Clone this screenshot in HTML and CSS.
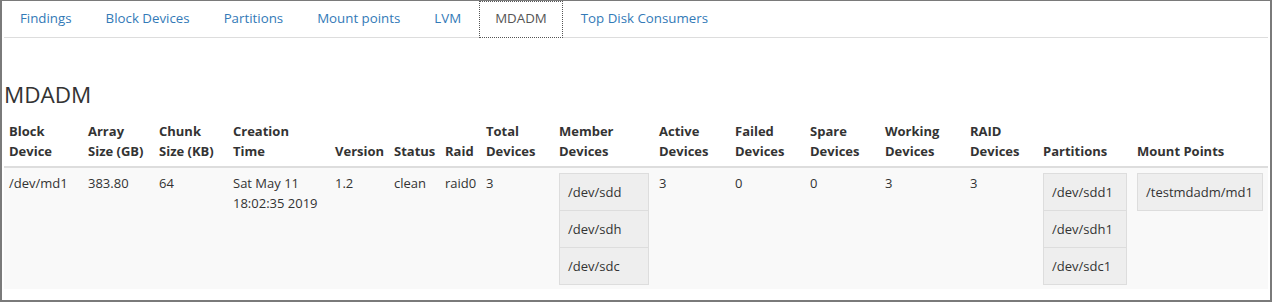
FILE: index.html
```html
<!DOCTYPE html>
<html lang="en">
<head>
  <meta charset="UTF-8" />
  <title>MDADM</title>
  <link rel="stylesheet" href="styles.css">
</head>
<body>
  <div class="window">
    <ul class="tabs">
      <li><a href="#">Findings</a></li>
      <li><a href="#">Block Devices</a></li>
      <li><a href="#">Partitions</a></li>
      <li><a href="#">Mount points</a></li>
      <li><a href="#">LVM</a></li>
      <li class="active"><a href="#">MDADM</a></li>
      <li><a href="#">Top Disk Consumers</a></li>
    </ul>

    <div class="pane">
      <h3 class="title">MDADM</h3>
      <table class="grid">
        <colgroup>
          <col class="c-block">
          <col class="c-size">
          <col class="c-chunk">
          <col class="c-time">
          <col class="c-version">
          <col class="c-status">
          <col class="c-raid">
          <col class="c-total">
          <col class="c-member">
          <col class="c-active">
          <col class="c-failed">
          <col class="c-spare">
          <col class="c-working">
          <col class="c-raiddev">
          <col class="c-parts">
          <col>
        </colgroup>
        <thead>
          <tr>
            <th>Block<br>Device</th>
            <th>Array<br>Size (GB)</th>
            <th>Chunk<br>Size (KB)</th>
            <th>Creation<br>Time</th>
            <th>Version</th>
            <th>Status</th>
            <th>Raid</th>
            <th>Total<br>Devices</th>
            <th>Member<br>Devices</th>
            <th>Active<br>Devices</th>
            <th>Failed<br>Devices</th>
            <th>Spare<br>Devices</th>
            <th>Working<br>Devices</th>
            <th>RAID<br>Devices</th>
            <th>Partitions</th>
            <th>Mount Points</th>
          </tr>
        </thead>
        <tbody>
          <tr>
            <td>/dev/md1</td>
            <td>383.80</td>
            <td>64</td>
            <td>Sat May 11<br>18:02:35 2019</td>
            <td>1.2</td>
            <td>clean</td>
            <td>raid0</td>
            <td>3</td>
            <td>
              <ul class="stack">
                <li>/dev/sdd</li>
                <li>/dev/sdh</li>
                <li>/dev/sdc</li>
              </ul>
            </td>
            <td>3</td>
            <td>0</td>
            <td>0</td>
            <td>3</td>
            <td>3</td>
            <td>
              <ul class="stack">
                <li>/dev/sdd1</li>
                <li>/dev/sdh1</li>
                <li>/dev/sdc1</li>
              </ul>
            </td>
            <td>
              <ul class="stack">
                <li>/testmdadm/md1</li>
              </ul>
            </td>
          </tr>
        </tbody>
      </table>
    </div>
  </div>
</body>
</html>
```

FILE: styles.css
```css
body {
  margin: 0;
  padding: 0;
  background-color: #fff;
  font-family: "Open Sans", "Noto Sans", sans-serif;
  font-size: 13px;
  line-height: 20px;
  color: #333;
}

.window {
  box-sizing: border-box;
  width: 1272px;
  height: 302px;
  border: 2px solid #7a7a7a;
  border-top-width: 1px;
  padding: 0 2px;
  overflow: hidden;
  background-color: #fff;
}

.tabs {
  display: flex;
  list-style: none;
  margin: 0;
  padding: 0;
  border-bottom: 1px solid #ddd;
  font-size: 13.3px;
}

.tabs li {
  margin-bottom: -1px;
}

.tabs a {
  display: block;
  margin-right: 2px;
  padding: 6px 15px 9px;
  border: 1px solid transparent;
  color: #337ab7;
  text-decoration: none;
}

.tabs .active a {
  color: #555;
  background-color: #fff;
  outline: 1px dotted #555;
  outline-offset: -1px;
}

.title {
  margin: 44px 0 8px;
  font-size: 22.5px;
  font-weight: normal;
  line-height: 26px;
}

.grid {
  width: 100%;
  border-collapse: separate;
  border-spacing: 0;
  table-layout: fixed;
}

.grid th,
.grid td {
  padding: 5px;
  text-align: left;
  vertical-align: top;
}

.grid th {
  vertical-align: bottom;
  border-bottom: 2px solid #ddd;
  font-weight: bold;
}

.grid tbody tr {
  background-color: #f9f9f9;
}

.c-block { width: 79px; }
.c-size { width: 71px; }
.c-chunk { width: 74px; }
.c-time { width: 102px; }
.c-version { width: 59px; }
.c-status { width: 51px; }
.c-raid { width: 41px; }
.c-total { width: 73px; }
.c-member { width: 100px; }
.c-active { width: 76px; }
.c-failed { width: 75px; }
.c-spare { width: 75px; }
.c-working { width: 85px; }
.c-raiddev { width: 73px; }
.c-parts { width: 94px; }

.stack {
  list-style: none;
  margin: 0;
  padding: 0;
}

.stack li {
  padding: 8px;
  border: 1px solid #ddd;
  background-color: #eee;
  margin-bottom: -1px;
  white-space: nowrap;
}
```
